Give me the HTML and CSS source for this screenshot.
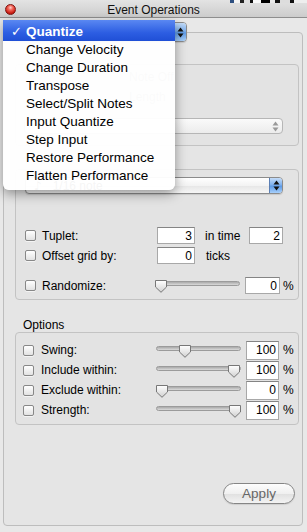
FILE: index.html
```html
<!DOCTYPE html>
<html lang="en">
<head>
    <meta charset="UTF-8">
    <meta name="viewport" content="width=device-width, initial-scale=1.0">
    <title>Event Operations</title>
    <link rel="stylesheet" href="styles.css">
</head>
<body>
    <div class="window">

        <!-- Title bar -->
        <div class="titlebar">
            <span class="close-btn"></span>
            <span class="title">Event Operations</span>
            <span></span>
            <span class="desktop-edge"></span>
        </div>

        <div class="content">
            <div class="panel">

                <!-- Operation chooser (its menu is open over it) -->
                <div class="popup popup-main">
                    <span class="popup-text"></span>
                    <span class="stepper stepper-blue">
                        <svg width="7" height="11" viewBox="0 0 7 11"><path d="M0.5 4.5 L3.5 0.5 L6.5 4.5 Z M0.5 6.5 L3.5 10.5 L6.5 6.5 Z" fill="#111"/></svg>
                    </span>
                </div>

                <!-- Mode box (mostly under the menu) -->
                <div class="box box-mode">
                    <div class="mode-row">Note Off</div>
                    <div class="mode-row">Length</div>
                    <div class="popup popup-disabled">
                        <span class="popup-text"></span>
                        <span class="stepper stepper-grey">
                            <svg width="7" height="11" viewBox="0 0 7 11"><path d="M0.5 4.5 L3.5 0.5 L6.5 4.5 Z M0.5 6.5 L3.5 10.5 L6.5 6.5 Z" fill="#9a9a9a"/></svg>
                        </span>
                    </div>
                </div>

                <!-- Grid box -->
                <div class="box box-grid">
                    <div class="popup popup-note">
                        <span class="popup-text"><span class="note">&#9834;</span>1/16 note</span>
                        <span class="stepper stepper-blue">
                            <svg width="7" height="11" viewBox="0 0 7 11"><path d="M0.5 4.5 L3.5 0.5 L6.5 4.5 Z M0.5 6.5 L3.5 10.5 L6.5 6.5 Z" fill="#111"/></svg>
                        </span>
                    </div>

                    <div class="row row-tuplet">
                        <span class="checkbox"></span>
                        <span class="label">Tuplet:</span>
                        <input class="field field-wide" type="text" value="3">
                        <span class="unit-intime">in time</span>
                        <input class="field field-small" type="text" value="2">
                    </div>
                    <div class="row row-offset">
                        <span class="checkbox"></span>
                        <span class="label">Offset grid by:</span>
                        <input class="field field-wide" type="text" value="0">
                        <span class="unit-ticks">ticks</span>
                    </div>
                    <div class="row row-random">
                        <span class="checkbox"></span>
                        <span class="label label-short">Randomize:</span>
                        <div class="slider">
                            <div class="track"></div>
                            <svg class="thumb" style="--pos: 0" width="12" height="13" viewBox="0 0 12 13"><defs><linearGradient id="tg1" x1="0" y1="0" x2="0" y2="1"><stop offset="0" stop-color="#ffffff"/><stop offset="1" stop-color="#d0d0d0"/></linearGradient></defs><path d="M0.5 0.5 H11.5 V7 L6 12.3 L0.5 7 Z" fill="url(#tg1)" stroke="#777"/></svg>
                        </div>
                        <input class="field field-random" type="text" value="0">
                        <span class="pct">%</span>
                    </div>
                </div>

                <!-- Options -->
                <div class="group-label">Options</div>
                <div class="box box-options">
                    <div class="opt-row">
                        <span class="checkbox"></span>
                        <span class="label">Swing:</span>
                        <div class="slider">
                            <div class="track"></div>
                            <svg class="thumb" style="--pos: 0.31" width="12" height="13" viewBox="0 0 12 13"><path d="M0.5 0.5 H11.5 V7 L6 12.3 L0.5 7 Z" fill="url(#tg1)" stroke="#777"/></svg>
                        </div>
                        <input class="field field-opt" type="text" value="100">
                        <span class="pct">%</span>
                    </div>
                    <div class="opt-row">
                        <span class="checkbox"></span>
                        <span class="label">Include within:</span>
                        <div class="slider">
                            <div class="track"></div>
                            <svg class="thumb" style="--pos: 0.98" width="12" height="13" viewBox="0 0 12 13"><path d="M0.5 0.5 H11.5 V7 L6 12.3 L0.5 7 Z" fill="url(#tg1)" stroke="#777"/></svg>
                        </div>
                        <input class="field field-opt" type="text" value="100">
                        <span class="pct">%</span>
                    </div>
                    <div class="opt-row">
                        <span class="checkbox"></span>
                        <span class="label">Exclude within:</span>
                        <div class="slider">
                            <div class="track"></div>
                            <svg class="thumb" style="--pos: 0" width="12" height="13" viewBox="0 0 12 13"><path d="M0.5 0.5 H11.5 V7 L6 12.3 L0.5 7 Z" fill="url(#tg1)" stroke="#777"/></svg>
                        </div>
                        <input class="field field-opt" type="text" value="0">
                        <span class="pct">%</span>
                    </div>
                    <div class="opt-row">
                        <span class="checkbox"></span>
                        <span class="label">Strength:</span>
                        <div class="slider">
                            <div class="track"></div>
                            <svg class="thumb" style="--pos: 1" width="12" height="13" viewBox="0 0 12 13"><path d="M0.5 0.5 H11.5 V7 L6 12.3 L0.5 7 Z" fill="url(#tg1)" stroke="#777"/></svg>
                        </div>
                        <input class="field field-opt" type="text" value="100">
                        <span class="pct">%</span>
                    </div>
                </div>

                <button class="apply">Apply</button>
            </div>
        </div>

        <!-- Open popup menu -->
        <ul class="menu">
            <li class="menu-item selected"><span class="check">&#10003;</span>Quantize</li>
            <li class="menu-item"><span class="check"></span>Change Velocity</li>
            <li class="menu-item"><span class="check"></span>Change Duration</li>
            <li class="menu-item"><span class="check"></span>Transpose</li>
            <li class="menu-item"><span class="check"></span>Select/Split Notes</li>
            <li class="menu-item"><span class="check"></span>Input Quantize</li>
            <li class="menu-item"><span class="check"></span>Step Input</li>
            <li class="menu-item"><span class="check"></span>Restore Performance</li>
            <li class="menu-item"><span class="check"></span>Flatten Performance</li>
        </ul>
    </div>
</body>
</html>
```

FILE: styles.css
```css
/* Base */
* {
    box-sizing: border-box;
}

body {
    margin: 0;
    background: #e8e8e8;
    font-family: "Liberation Sans", Arial, sans-serif;
    font-size: 12px;
    color: #000;
}

.window {
    position: relative;
    width: 307px;
    height: 532px;
    overflow: hidden;
    background: #e8e8e8;
}

/* Title bar */
.titlebar {
    position: relative;
    display: grid;
    grid-template-columns: 1fr auto 1fr;
    align-items: start;
    height: 18px;
    background: linear-gradient(#e3e3e3, #cccccc);
    border-bottom: 1px solid #8e8e8e;
}

.close-btn {
    width: 11px;
    height: 11px;
    margin: 4px 0 0 5px;
    border-radius: 50%;
    border: 1px solid #7d1410;
    background: radial-gradient(circle at 50% 30%, #ffd0ca 0, #f2685c 30%, #cc1e14 70%, #8c0c06 100%);
}

.title {
    margin-top: 3px;
    line-height: 14px;
    font-size: 12px;
    color: #111;
}

.desktop-edge {
    position: absolute;
    top: 0;
    right: 0;
    width: 77px;
    height: 3px;
    background: linear-gradient(to right, #2d4f80 0 4px, #f4f4f4 4px 10px, #222 10px 14px, #e0e0e0 14px 20px, #111 20px 23px, #fafafa 23px 31px, #000 31px 40px, #e8e8e8 40px 45px, #111 45px 50px, #ddd 50px 60px, #111 60px 64px, #eee 64px 77px);
}

/* Main panel */
.content {
    padding: 14px 0 0 3px;
}

.panel {
    display: flex;
    flex-direction: column;
    width: 300px;
    height: 494px;
    border: 1px solid #bdbdbd;
    border-radius: 4px;
    background: #e5e5e5;
}

/* Popup buttons */
.popup {
    display: flex;
    overflow: hidden;
    border: 1px solid #8b8b8b;
    border-radius: 4px;
    background: linear-gradient(#ffffff, #f3f3f3 50%, #e6e6e6 51%, #f6f6f6);
    box-shadow: 0 1px 1px rgba(0, 0, 0, 0.12);
}

.popup-text {
    flex: 1;
    display: flex;
    align-items: center;
    padding-left: 9px;
}

.stepper {
    display: flex;
    align-items: center;
    justify-content: center;
    width: 13px;
}

.stepper-blue {
    border-left: 1px solid #5b7fb4;
    background: linear-gradient(#c4dcf8, #7fb1ee 45%, #5d9ae6 55%, #a8d0fb);
}

.stepper-grey {
    background: transparent;
}

.popup-main {
    width: 179px;
    height: 20px;
    margin: -11px 0 0 4px;
}

.popup-disabled {
    height: 16px;
    margin: 11px 0 0 8px;
    border-color: #b6b6b6;
    background: linear-gradient(#fafafa, #ececec);
    box-shadow: none;
}

.popup-note {
    height: 17px;
}

.popup-note .popup-text {
    align-items: flex-end;
    line-height: 14px;
}

.note {
    margin: 0 11px 0 -1px;
    font-family: "DejaVu Sans", sans-serif;
    font-size: 12px;
}

/* Group boxes */
.box {
    margin: 0 3px 0 11px;
    border: 1px solid #c3c3c3;
    border-radius: 4px;
    background: #e3e3e3;
}

.box-mode {
    height: 82px;
    margin-top: 22px;
    padding: 2px 15px 0 0;
}

.mode-row {
    height: 20px;
    line-height: 20px;
    padding-left: 113px;
    color: #888;
}

.box-grid {
    height: 131px;
    margin-top: 23px;
    padding: 7px 15px 0 9px;
}

.group-label {
    margin: 18px 0 0 19px;
    line-height: 14px;
}

.box-options {
    height: 93px;
    padding: 7px 0 0 7px;
}

/* Rows */
.row {
    display: flex;
    align-items: center;
    height: 17px;
}

.row-tuplet {
    margin-top: 33px;
}

.row-offset {
    margin-top: 3px;
}

.row-random {
    margin-top: 13px;
}

.opt-row {
    display: flex;
    align-items: center;
    height: 20px;
}

.checkbox {
    flex: none;
    width: 11px;
    height: 11px;
    margin-right: 6px;
    border: 1px solid #888;
    border-radius: 2px;
    background: linear-gradient(#ffffff, #e2e2e2);
    box-shadow: 0 1px 0 rgba(255, 255, 255, 0.6);
}

.opt-row .checkbox {
    margin-right: 7px;
}

.label {
    flex: none;
    width: 115px;
}

.label-short {
    width: 113px;
}

/* Text fields */
.field {
    flex: none;
    height: 17px;
    padding: 0 2px 0 0;
    border: 1px solid #a8a8a8;
    border-top-color: #848484;
    border-radius: 0;
    background: #fff;
    font-family: "Liberation Sans", Arial, sans-serif;
    font-size: 12px;
    text-align: right;
    outline: none;
}

.field-wide {
    width: 38px;
}

.field-small {
    width: 34px;
}

.field-random {
    width: 35px;
    margin-left: 5px;
}

.field-opt {
    width: 33px;
    height: 19px;
    margin-left: 5px;
}

.unit-intime {
    width: 54px;
    padding-left: 10px;
}

.unit-ticks {
    padding-left: 11px;
}

.pct {
    margin-left: 4px;
}

.row .pct {
    margin-left: 3px;
}

/* Sliders */
.slider {
    position: relative;
    flex: none;
    width: 85px;
    height: 13px;
    margin-top: 2px;
}

.track {
    height: 5px;
    margin-top: 1px;
    border: 1px solid #9b9b9b;
    border-radius: 3px;
    background: linear-gradient(#a9a9a9, #dadada);
}

.thumb {
    position: absolute;
    top: 0;
    left: calc(var(--pos) * (100% - 12px));
}

/* Apply button */
.apply {
    align-self: flex-end;
    width: 72px;
    height: 21px;
    margin: auto 7px 21px 0;
    padding: 0;
    border: 1px solid #858585;
    border-radius: 11px;
    background: linear-gradient(#fdfdfd, #f0f0f0 50%, #e0e0e0 51%, #f3f3f3);
    box-shadow: 0 1px 1px rgba(0, 0, 0, 0.1);
    font-family: "Liberation Sans", Arial, sans-serif;
    font-size: 13.5px;
    color: #666;
}

/* Open menu */
.menu {
    position: absolute;
    top: 20px;
    left: 3px;
    width: 172px;
    margin: 0;
    padding: 0 0 5px;
    list-style: none;
    background: rgba(255, 255, 255, 0.96);
    border-radius: 3px 3px 6px 6px;
    box-shadow: 0 4px 12px rgba(0, 0, 0, 0.38);
}

.menu-item {
    display: flex;
    height: 18px;
    line-height: 18px;
    padding-left: 8px;
    font-size: 13.5px;
    color: #000;
}

.menu-item.selected {
    height: 21px;
    padding-top: 3px;
    background: linear-gradient(#5a88f2, #2d5ee2 60%, #1f4fd6);
    color: #fff;
    font-weight: bold;
}

.check {
    flex: none;
    width: 15px;
    font-family: "DejaVu Sans", sans-serif;
    font-size: 13px;
}
```
